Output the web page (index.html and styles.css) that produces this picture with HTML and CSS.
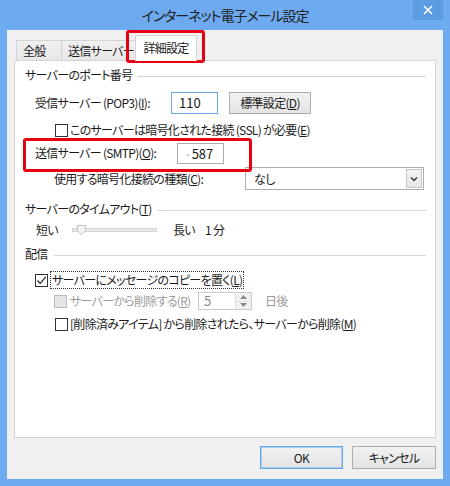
FILE: index.html
```html
<!DOCTYPE html>
<html lang="ja">
<head>
<meta charset="utf-8">
<title>インターネット電子メール設定</title>
<link rel="stylesheet" href="styles.css">
</head>
<body>
<div class="window">
  <div class="titlebar">
    <span class="title">インターネット電子メール設定</span>
    <span class="close"><svg width="10" height="10" viewBox="0 0 10 10"><path d="M1 1L9 9M9 1L1 9" stroke="#fff" stroke-width="1.6" fill="none"/></svg></span>
  </div>
  <div class="client">
    <div class="tabs">
      <div class="tab tab-general">全般</div>
      <div class="tab tab-send">送信サーバー</div>
      <div class="tab tab-adv active">詳細設定</div>
    </div>
    <div class="panel">
      <div class="group">
        <span class="group-title">サーバーのポート番号</span><span class="rule"></span>
      </div>
      <div class="row row-pop">
        <span class="lbl lbl-pop">受信サーバー (POP3)(<u>I</u>):</span>
        <span class="input focus">110</span>
        <span class="btn btn-std">標準設定(<u>D</u>)</span>
      </div>
      <div class="row row-ssl">
        <span class="cb"></span>
        <span class="cb-text">このサーバーは暗号化された接続 (SSL) が必要(<u>E</u>)</span>
      </div>
      <div class="row row-smtp">
        <span class="lbl lbl-smtp">送信サーバー (SMTP)(<u>O</u>):</span>
        <span class="input smtp"><span class="caret">·</span>587</span>
      </div>
      <div class="row row-enc">
        <span class="lbl lbl-enc">使用する暗号化接続の種類(<u>C</u>):</span>
        <span class="select"><span class="select-text">なし</span><span class="arrow"><svg width="8" height="6" viewBox="0 0 8 6"><path d="M1 1.5L4 4.5L7 1.5" stroke="#333" stroke-width="1.4" fill="none"/></svg></span></span>
      </div>
      <div class="group group-timeout">
        <span class="group-title">サーバーのタイムアウト(<u>T</u>)</span><span class="rule"></span>
      </div>
      <div class="row row-slider">
        <span class="lbl lbl-short">短い</span>
        <span class="slider"><span class="track"></span><svg class="thumb" width="9" height="10" viewBox="0 0 9 10"><path d="M0.5 0.5H8.5V5.5L4.5 9.5L0.5 5.5Z" fill="#f3f3f3" stroke="#c2c2c2"/></svg></span>
        <span class="lbl lbl-long">長い</span>
        <span class="lbl">1 分</span>
      </div>
      <div class="group group-deliver">
        <span class="group-title">配信</span><span class="rule"></span>
      </div>
      <div class="row row-keep">
        <span class="cb checked"><svg width="11" height="11" viewBox="0 0 11 11"><path d="M1.5 5.5L4.2 8.3L9.8 1.8" stroke="#222" stroke-width="1.2" fill="none"/></svg></span>
        <span class="cb-text focus-rect">サーバーにメッセージのコピーを置く(<u>L</u>)</span>
      </div>
      <div class="row row-remove">
        <span class="cb disabled"></span>
        <span class="cb-text dis lbl-remove">サーバーから削除する(<u>R</u>)</span>
        <span class="spin"><span class="spin-val">5</span><span class="spin-btns"><span class="spin-b"><svg width="7" height="4" viewBox="0 0 7 4"><path d="M0 4L3.5 0L7 4Z" fill="#8a8a8a"/></svg></span><span class="spin-b"><svg width="7" height="4" viewBox="0 0 7 4"><path d="M0 0L3.5 4L7 0Z" fill="#8a8a8a"/></svg></span></span></span>
        <span class="dis days">日後</span>
      </div>
      <div class="row row-deleted">
        <span class="cb"></span>
        <span class="cb-text">[削除済みアイテム] から削除されたら、サーバーから削除(<u>M</u>)</span>
      </div>
    </div>
    <div class="buttons">
      <span class="btn btn-dlg default">OK</span>
      <span class="btn btn-dlg">キャンセル</span>
    </div>
  </div>
  <div class="mark mark-tab"></div>
  <div class="mark mark-smtp"></div>
</div>
</body>
</html>
```

FILE: styles.css
```css
* { box-sizing: border-box; }
html, body { margin: 0; padding: 0; }
body {
  font-family: "Noto Sans CJK JP", "Noto Sans", sans-serif;
  font-size: 12px;
  letter-spacing: -0.7px;
  color: #1a1a1a;
  font-feature-settings: "palt";
  background: #fff;
}
.window {
  position: relative;
  width: 450px;
  height: 486px;
  background: #6eaaf0;
  display: flex;
  flex-direction: column;
}
.titlebar {
  height: 30px;
  display: grid;
  grid-template-columns: 1fr auto 1fr;
}
.title {
  grid-column: 2;
  align-self: center;
  font-size: 14px;
  letter-spacing: -1px;
  line-height: 20px;
  color: #222;
}
.close {
  grid-column: 3;
  justify-self: end;
  align-self: start;
  margin-right: 7px;
  width: 30px;
  height: 20px;
  background: #5b9be2;
  display: flex;
  align-items: center;
  justify-content: center;
}
.client {
  flex: 1;
  margin: 0 7px 7px;
  background: #f0f0f0;
  padding: 5px 7px 0 7px;
  display: flex;
  flex-direction: column;
}
.tabs {
  display: flex;
  align-items: flex-end;
  height: 25px;
  padding-left: 2px;
}
.tab {
  height: 20px;
  border: 1px solid #d4d4d4;
  border-bottom: none;
  background: linear-gradient(#f0f0f0, #e8e8e8);
  line-height: 19px;
  padding-left: 6px;
  white-space: nowrap;
  overflow: hidden;
}
.tab + .tab { border-left: none; }
.tab-general { width: 46px; }
.tab-send { width: 75px; }
.tab-adv { width: 58px; }
.tab.active {
  position: relative;
  z-index: 1;
  height: 26px;
  width: 62px;
  margin: 0 -2px -1px -2px;
  background: #fff;
  border-left: 1px solid #d4d4d4;
  padding-left: 0;
  text-align: center;
  line-height: 24px;
}
.panel {
  height: 378px;
  background: #fff;
  border: 1px solid #d4d4d4;
  padding: 5px 9px 0 10px;
}
.group {
  display: flex;
  align-items: center;
  height: 18px;
  gap: 6px;
}
.group-title { line-height: 18px; white-space: nowrap; }
.rule {
  flex: 1;
  height: 0;
  border-top: 1px solid #d5d5d5;
  margin-top: 2px;
}
.row {
  display: flex;
  align-items: center;
  white-space: nowrap;
  line-height: 16px;
}
.lbl { white-space: nowrap; }
.row-pop { margin-top: 8px; height: 22px; padding-left: 10px; }
.lbl-pop { width: 136px; }
.input {
  height: 22px;
  width: 47px;
  border: 1px solid #acacac;
  background: #fff;
  padding-left: 7px;
  line-height: 20px;
  font-size: 13px;
  letter-spacing: 0;
}
.input.focus { border-color: #6aa6e6; }
.input.smtp { height: 21px; }
.caret { color: #777; font-size: 10px; margin-right: 1px; }
.btn {
  display: flex;
  align-items: center;
  justify-content: center;
  border: 1px solid #adadad;
  background: linear-gradient(#f2f2f2, #e3e3e3);
  white-space: nowrap;
}
.btn-std { width: 82px; height: 22px; margin-left: 11px; }
.row-ssl { margin-top: 7px; height: 18px; padding-left: 30px; }
.cb {
  width: 13px;
  height: 13px;
  border: 1px solid #333;
  background: #fff;
  flex: none;
  display: flex;
  align-items: center;
  justify-content: center;
}
.cb.disabled { border-color: #bcbcbc; background: #e6e6e6; }
.cb-text { margin-left: 2px; }
.row-smtp { margin-top: 3px; height: 22px; padding-left: 10px; }
.lbl-smtp { width: 142px; }
.row-enc { margin-top: 3px; height: 23px; padding-left: 29px; }
.lbl-enc { width: 191px; }
.select {
  width: 179px;
  height: 23px;
  border: 1px solid #acacac;
  background: #fff;
  display: flex;
  align-items: center;
}
.select-text { padding-left: 8px; flex: 1; }
.arrow {
  width: 16px;
  height: 19px;
  margin-right: 1px;
  border: 1px solid #c6c6c6;
  background: linear-gradient(#f4f4f4, #e6e6e6);
  display: flex;
  align-items: center;
  justify-content: center;
}
.group-timeout { margin-top: 10px; }
.row-slider { margin-top: 3px; height: 18px; padding-left: 11px; }
.lbl-short { width: 36px; }
.slider {
  position: relative;
  width: 85px;
  height: 18px;
  display: flex;
  align-items: center;
}
.track {
  flex: 1;
  height: 4px;
  background: #e7e7e7;
  border: 1px solid #d6d6d6;
}
.thumb { position: absolute; left: 5px; top: 4px; }
.lbl-long { margin-left: 16px; width: 32px; }
.group-deliver { margin-top: 6px; }
.row-keep { margin-top: 8px; height: 18px; padding-left: 10px; }
.focus-rect {
  outline: 1px dotted #333;
  padding: 0 1px;
  margin-left: 3px;
  line-height: 16px;
}
.row-remove { margin-top: 3px; height: 18px; padding-left: 29px; }
.dis { color: #9a9a9a; }
.lbl-remove { width: 128px; margin-left: 3px; }
.spin {
  width: 54px;
  height: 18px;
  border: 1px solid #c9c9c9;
  display: flex;
  background: #fff;
}
.spin-val { flex: 1; padding-left: 5px; color: #8a8a8a; line-height: 16px; font-size: 13px; }
.spin-btns {
  width: 16px;
  display: flex;
  flex-direction: column;
  border-left: 1px solid #e0e0e0;
}
.spin-b {
  flex: 1;
  display: flex;
  align-items: center;
  justify-content: center;
  background: #f2f2f2;
}
.spin-b + .spin-b { border-top: 1px solid #e0e0e0; }
.days { margin-left: 13px; }
.row-deleted { margin-top: 5px; height: 18px; padding-left: 30px; }
.buttons {
  display: flex;
  justify-content: flex-end;
  gap: 9px;
  margin-top: 8px;
}
.btn-dlg { width: 84px; height: 23px; }
.btn-dlg.default { width: 83px; border-color: #6aa6e6; box-shadow: inset 0 0 0 1px #a8cdf2; }
.mark {
  position: absolute;
  border: 3px solid #e60012;
  border-radius: 3px;
}
.mark-tab { left: 126px; top: 30px; width: 79px; height: 33px; }
.mark-smtp { left: 23px; top: 138px; width: 229px; height: 34px; }
```
